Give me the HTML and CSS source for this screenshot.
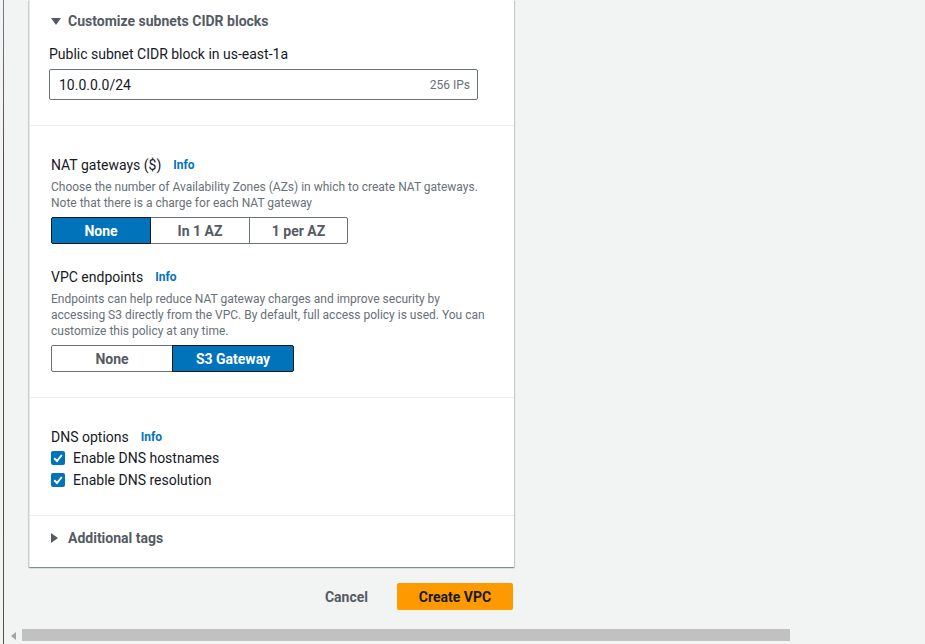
FILE: index.html
```html
<!DOCTYPE html>
<html lang="en">
<head>
<meta charset="utf-8">
<title>Create VPC</title>
<link rel="stylesheet" href="styles.css">
</head>
<body>
<div class="window">
  <div class="edge"><div class="edge-line"></div></div>
  <div class="main">
    <div class="content">
      <div class="card">
        <section class="sec sec-cidr">
          <div class="expander">
            <svg class="caret" width="10" height="7" viewBox="0 0 10 7"><path d="M0 0H10L5 7Z" fill="#545b64"/></svg>
            <span>Customize subnets CIDR blocks</span>
          </div>
          <label class="field-label">Public subnet CIDR block in us-east-1a</label>
          <div class="input">
            <span class="input-value">10.0.0.0/24</span>
            <span class="input-hint">256 IPs</span>
          </div>
        </section>
        <section class="sec sec-nat">
          <div class="label-row"><span class="label">NAT gateways ($)</span><a class="info">Info</a></div>
          <p class="desc">Choose the number of Availability Zones (AZs) in which to create NAT gateways. Note that there is a charge for each NAT gateway</p>
          <div class="seg seg-nat">
            <span class="seg-btn selected">None</span>
            <span class="seg-btn">In 1 AZ</span>
            <span class="seg-btn">1 per AZ</span>
          </div>
          <div class="label-row label-row-2"><span class="label">VPC endpoints</span><a class="info">Info</a></div>
          <p class="desc">Endpoints can help reduce NAT gateway charges and improve security by accessing S3 directly from the VPC. By default, full access policy is used. You can customize this policy at any time.</p>
          <div class="seg seg-vpce">
            <span class="seg-btn">None</span>
            <span class="seg-btn selected">S3 Gateway</span>
          </div>
        </section>
        <section class="sec sec-dns">
          <div class="label-row"><span class="label">DNS options</span><a class="info">Info</a></div>
          <div class="check-row check-first">
            <span class="checkbox"><svg width="14" height="14" viewBox="0 0 14 14"><path d="M3.2 7.2L6 10L10.8 4" fill="none" stroke="#fff" stroke-width="2"/></svg></span>
            <span>Enable DNS hostnames</span>
          </div>
          <div class="check-row">
            <span class="checkbox"><svg width="14" height="14" viewBox="0 0 14 14"><path d="M3.2 7.2L6 10L10.8 4" fill="none" stroke="#fff" stroke-width="2"/></svg></span>
            <span>Enable DNS resolution</span>
          </div>
        </section>
        <section class="sec sec-tags">
          <div class="expander">
            <svg class="caret caret-right" width="7" height="10" viewBox="0 0 7 10"><path d="M0 0V10L7 5Z" fill="#545b64"/></svg>
            <span>Additional tags</span>
          </div>
        </section>
      </div>
      <div class="actions">
        <button class="btn-link">Cancel</button>
        <button class="btn-primary">Create VPC</button>
      </div>
    </div>
    <div class="hscroll">
      <svg class="hs-arrow" width="5" height="8" viewBox="0 0 5 8"><path d="M5 0V8L0 4Z" fill="#a3a3a3"/></svg>
      <div class="hs-thumb"></div>
    </div>
  </div>
</div>
</body>
</html>
```

FILE: styles.css
```css
* { box-sizing: border-box; }
html, body { margin: 0; padding: 0; }
body {
  background: #f2f3f3;
  font-family: Roboto, "Open Sans", "Liberation Sans", sans-serif;
  font-size: 14px;
  color: #16191f;
}
.window {
  display: flex;
  height: 644px;
  overflow: hidden;
}
.edge {
  width: 4px;
  display: flex;
  justify-content: flex-end;
  background: #f2f3f3;
}
.edge-line {
  width: 1px;
  background: linear-gradient(#72808d 0%, #6d6470 10%, #5a4a52 25%, #4f5244 45%, #4c5a3a 100%);
}
.main {
  flex: 1;
  display: flex;
  flex-direction: column;
}
.content {
  flex: 1;
  padding-left: 25px;
}
.card {
  width: 485px;
  background: #fff;
  border-left: 1px solid #e4e7e7;
  box-shadow: 0 1px 1px 0 rgba(0, 28, 36, 0.3), 1px 1px 1px 0 rgba(0, 28, 36, 0.15), -1px 1px 1px 0 rgba(0, 28, 36, 0.1);
}
.sec {
  border-bottom: 1px solid #eaeded;
  padding-left: 21px;
  padding-right: 20px;
}
.sec:last-child { border-bottom: none; }
.sec-cidr { padding: 10px 36px 25px 19px; }
.sec-nat { padding-top: 28px; padding-bottom: 25px; }
.sec-dns { padding-top: 28px; padding-bottom: 24px; }
.sec-tags { padding-top: 11px; padding-bottom: 18px; }

.expander {
  display: flex;
  align-items: center;
  height: 22px;
  font-weight: 700;
  color: #545b64;
}
.sec-cidr .expander { padding-left: 2px; }
.caret { margin-right: 7px; }
.caret-right { margin-right: 10px; }

.field-label {
  display: block;
  margin-top: 11px;
  line-height: 22px;
}
.input {
  margin-top: 4px;
  height: 31px;
  border: 1px solid #687078;
  border-radius: 2px;
  display: flex;
  align-items: center;
  justify-content: space-between;
  padding: 0 7px 0 9px;
}
.input-hint {
  font-size: 12px;
  color: #687078;
}

.label-row {
  display: flex;
  align-items: center;
  line-height: 22px;
}
.label-row-2 { margin-top: 22px; }
.info {
  margin-left: 12px;
  font-size: 12px;
  font-weight: 700;
  color: #0073bb;
}
.desc {
  margin: 3px 0 0;
  font-size: 12px;
  line-height: 16px;
  color: #687078;
}
.seg {
  display: flex;
  margin-top: 6px;
}
.seg-btn {
  height: 27px;
  display: flex;
  align-items: center;
  justify-content: center;
  border: 1px solid #687078;
  margin-left: -1px;
  font-weight: 700;
  color: #545b64;
  background: #fff;
}
.seg-btn:first-child { margin-left: 0; border-radius: 2px 0 0 2px; }
.seg-btn:last-child { border-radius: 0 2px 2px 0; }
.seg-btn.selected {
  background: #0073bb;
  color: #fff;
  border-color: #16191f;
  position: relative;
}
.seg-nat .seg-btn { width: 100px; }
.seg-nat .seg-btn:last-child { width: 99px; }
.seg-vpce { margin-top: 6px; }
.seg-vpce .seg-btn { width: 122px; }

.check-row {
  display: flex;
  align-items: center;
  height: 22px;
}
.check-first { margin-top: -1px; }
.checkbox {
  width: 14px;
  height: 14px;
  border-radius: 2px;
  background: #0073bb;
  margin-right: 8px;
  display: flex;
}

.actions {
  width: 485px;
  display: flex;
  justify-content: flex-end;
  align-items: center;
  margin-top: 16px;
}
.btn-link, .btn-primary {
  font-family: inherit;
  font-size: 14px;
  font-weight: 700;
  border: none;
  height: 27px;
  border-radius: 2px;
}
.btn-link {
  background: transparent;
  color: #545b64;
  padding: 0 29px 0 20px;
}
.btn-primary {
  background: #ff9900;
  color: #16191f;
  width: 116px;
  margin-right: 1px;
}

.hscroll {
  height: 18px;
  display: flex;
  align-items: flex-start;
  padding-top: 3px;
}
.hs-arrow { margin: 3px 0 0 7px; }
.hs-thumb {
  margin-left: 6px;
  width: 768px;
  height: 12px;
  background: #c1c1c1;
}
```
